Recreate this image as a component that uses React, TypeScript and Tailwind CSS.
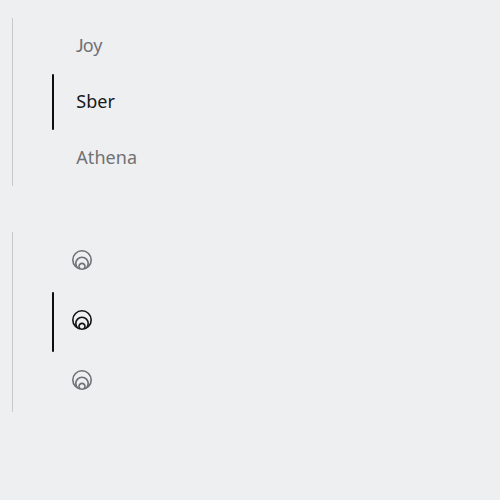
const names = ["Joy", "Sber", "Athena"];

function RingsIcon() {
  return (
    <svg width="20" height="20" viewBox="0 0 20 20" fill="none" stroke="currentColor" strokeWidth="1.6">
      <circle cx="10" cy="10" r="9.2" />
      <path d="M5.8 18A6.2 6.2 0 1 1 14.2 18" />
      <path d="M8.2 18.8A3 3 0 1 1 11.8 18.8" />
    </svg>
  );
}

function Marker() {
  return <span className="w-0.5 self-stretch rounded-full bg-[#0d0e10]" />;
}

function Label({ name }: { name: string }) {
  if (name.startsWith("J")) {
    return (
      <span className="ml-[22px] -mt-0.5 text-[18px] leading-6">
        <span className="font-['Lato',sans-serif] tracking-[-0.8px]">J</span>
        {name.slice(1)}
      </span>
    );
  }
  return <span className="ml-[22.3px] -mt-0.5 text-[18px] leading-6 tracking-[0.05px]">{name}</span>;
}

export default function App() {
  return (
    <main className="flex h-[500px] w-[500px] flex-col gap-[46px] bg-[#eeeff1] pt-[18px] pl-3 font-['Noto_Sans',sans-serif] text-[#707174]">
      <ul className="flex flex-col border-l border-[#c8c9cb] pl-[39px]">
        {names.map((name, i) => (
          <li key={name} className={i === 1 ? "flex h-14 items-center text-[#17181a]" : "flex h-14 items-center"}>
            {i === 1 ? <Marker /> : <span className="w-0.5" />}
            <Label name={name} />
          </li>
        ))}
      </ul>
      <ul className="flex flex-col border-l border-[#c8c9cb] pl-[39px]">
        {names.map((name, i) => (
          <li key={name} className={i === 1 ? "flex h-15 items-center text-[#101113]" : "flex h-15 items-center"}>
            {i === 1 ? <Marker /> : <span className="w-0.5" />}
            <span className="ml-[18px] -mt-1">
              <RingsIcon />
            </span>
          </li>
        ))}
      </ul>
    </main>
  );
}
